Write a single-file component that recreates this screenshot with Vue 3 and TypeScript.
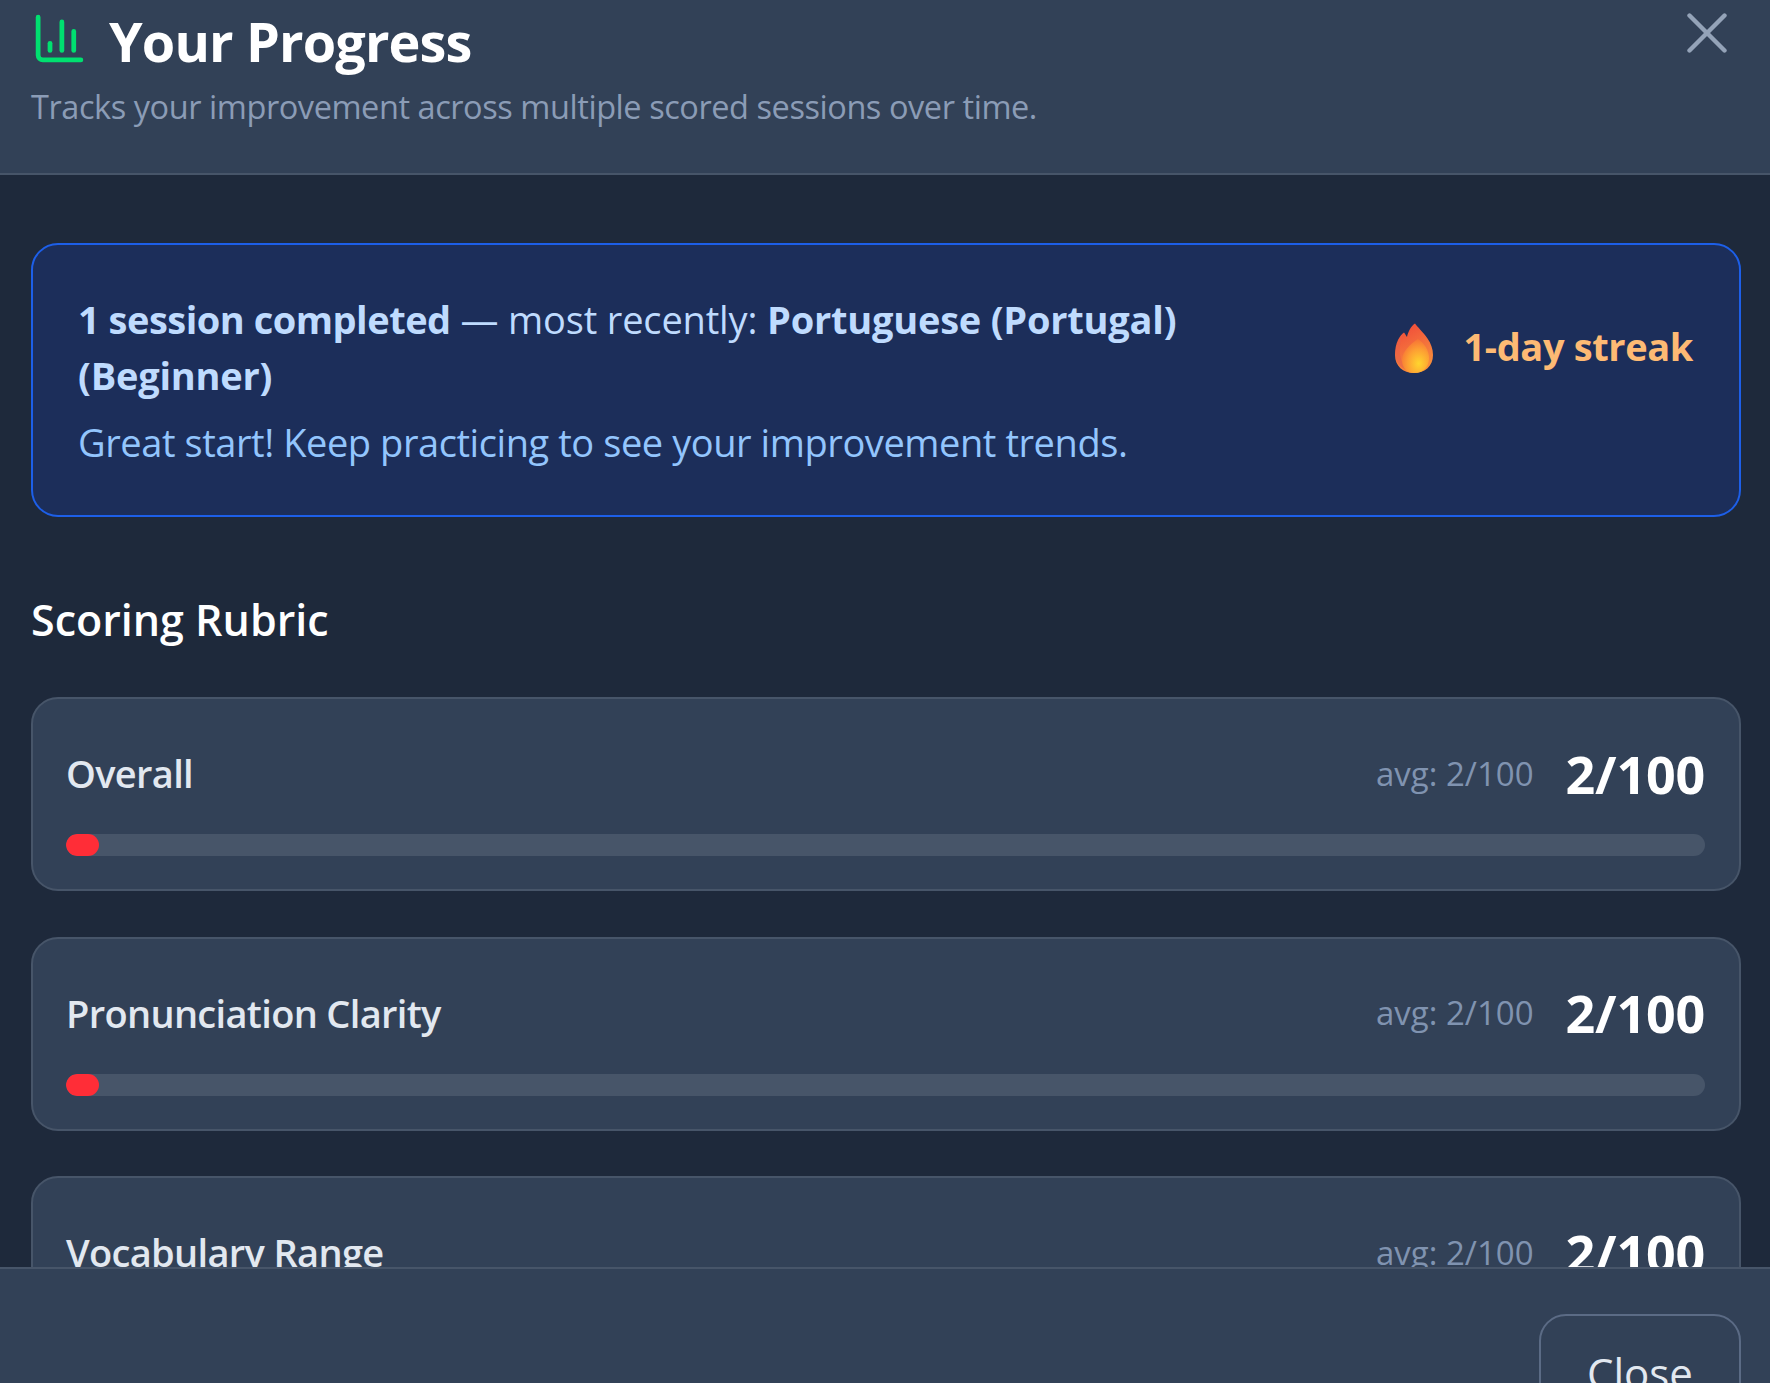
<script setup lang="ts">
interface Row { label: string; avg: string; score: string; pct: number }
const rows: Row[] = [
  { label: 'Overall', avg: 'avg: 2/100', score: '2/100', pct: 2 },
  { label: 'Pronunciation Clarity', avg: 'avg: 2/100', score: '2/100', pct: 2 },
  { label: 'Vocabulary Range', avg: 'avg: 2/100', score: '2/100', pct: 2 },
]
</script>

<template>
  <div class="modal">
    <header class="head">
      <div class="head-text">
        <h1 class="title">
          <svg class="chart" viewBox="0 0 24 24" fill="none" stroke="#00e070" stroke-width="2" stroke-linecap="round" stroke-linejoin="round">
            <path d="M3 3v16a2 2 0 0 0 2 2h16" />
            <path d="M18 17V9" />
            <path d="M13 17V5" />
            <path d="M8 17v-3" />
          </svg>
          <span>Your Progress</span>
        </h1>
        <p class="sub">Tracks your improvement across multiple scored sessions over time.</p>
      </div>
      <button class="x" aria-label="Close">
        <svg viewBox="0 0 40 40" fill="none" stroke="#94a3b8" stroke-width="4.4" stroke-linecap="round">
          <path d="M2.5 2.5 37.5 37.5" />
          <path d="M37.5 2.5 2.5 37.5" />
        </svg>
      </button>
    </header>

    <main class="body">
      <section class="banner">
        <div class="banner-text">
          <p class="summary"><strong>1 session completed</strong> — most recently: <strong class="lang">Portuguese (Portugal) (Beginner)</strong></p>
          <p class="note">Great start! Keep practicing to see your improvement trends.</p>
        </div>
        <div class="streak">
          <svg class="flame" viewBox="0 0 38 50">
            <defs>
              <linearGradient id="fo" x1="0.2" y1="0" x2="0.6" y2="1">
                <stop offset="0" stop-color="#f0483a" />
                <stop offset="0.6" stop-color="#f4763c" />
                <stop offset="1" stop-color="#f9903a" />
              </linearGradient>
              <radialGradient id="fi" cx="0.62" cy="0.72" r="0.75">
                <stop offset="0" stop-color="#ffd52e" />
                <stop offset="0.55" stop-color="#fda033" />
                <stop offset="1" stop-color="#f66d36" />
              </radialGradient>
            </defs>
            <path fill="url(#fo)" d="M20 0.5C22 3.5 28 9 32.5 15.5C36 20.5 38 26 38 32C38 43 30 50 19 50C8 50 0 43 0 32C0 26 1 21 3 17C4.5 14 7 10.5 9 9.5C10.5 11 11 13 12 14C13 9 16 3 20 0.5Z" />
            <path fill="#e8604a" opacity="0.55" d="M9 9.5C6 15 4 22 5 31C5.8 38 9 44 14 48C8 46 1 41 0.5 32C0.3 24 4 14 9 9.5Z" />
            <path fill="url(#fi)" d="M23 16C29 20 34 27 34 35C34 44 28 50 19 50C11 50 7 44 7 37C7 29 15 21 23 16Z" />
          </svg>
          <span class="streak-text">1-day streak</span>
        </div>
      </section>

      <h2 class="rubric">Scoring Rubric</h2>

      <div class="cards">
        <article v-for="r in rows" :key="r.label" class="card">
          <div class="card-top">
            <span class="label">{{ r.label }}</span>
            <div class="vals">
              <span class="avg">{{ r.avg }}</span>
              <span class="score">{{ r.score }}</span>
            </div>
          </div>
          <div class="track"><div class="fill" :style="{ width: r.pct + '%' }"></div></div>
        </article>
      </div>
    </main>

    <footer class="foot">
      <button class="close">Close</button>
    </footer>
  </div>
</template>

<style scoped>
.modal {
  width: 1770px;
  height: 1383px;
  display: flex;
  flex-direction: column;
  overflow: hidden;
  background: #1e293b;
  font-family: "Open Sans", "Noto Sans", sans-serif;
  color: #fff;
}
.head {
  flex: none;
  height: 175px;
  box-sizing: border-box;
  background: #324157;
  border-bottom: 2px solid #475569;
  display: flex;
  justify-content: space-between;
  align-items: flex-start;
  padding: 12px 43px 0 31px;
}
.title {
  margin: 0;
  display: flex;
  align-items: center;
  gap: 21px;
  font-size: 54px;
  line-height: 58px;
  font-weight: 700;
  letter-spacing: -0.85px;
}
.chart {
  width: 57px;
  height: 57px;
  margin-top: -6px;
  flex: none;
}
.sub {
  margin: 15px 0 0;
  font-size: 32.5px;
  line-height: 44px;
  letter-spacing: -0.44px;
  color: #8b9cb6;
}
.x {
  width: 40px;
  height: 40px;
  padding: 0;
  margin-top: 1px;
  border: 0;
  background: none;
  display: block;
}
.x svg {
  width: 40px;
  height: 40px;
  display: block;
}
.body {
  flex: 1;
  min-height: 0;
  overflow: hidden;
  padding: 68px 29px 0 31px;
}
.banner {
  height: 274px;
  box-sizing: border-box;
  background: #1c2e5a;
  border: 2px solid #1d5fe8;
  border-radius: 27px;
  display: flex;
  align-items: center;
  justify-content: space-between;
  padding: 0 46px 0 45px;
}
.banner-text {
  width: 1110px;
}
.summary {
  margin: 0;
  padding-top: 1px;
  font-size: 38px;
  line-height: 56px;
  letter-spacing: -0.15px;
  color: #bfdbfe;
}
.summary strong {
  font-weight: 700;
  letter-spacing: -0.5px;
}
.summary .lang {
  letter-spacing: -0.23px;
}
.note {
  margin: 11px 0 0;
  font-size: 38px;
  line-height: 56px;
  letter-spacing: -0.43px;
  color: #93c5fd;
}
.streak {
  display: flex;
  align-items: center;
  gap: 31px;
  margin-top: -68px;
}
.flame {
  width: 38px;
  height: 50px;
  flex: none;
  margin-top: 4px;
}
.streak-text {
  font-size: 38px;
  font-weight: 700;
  letter-spacing: -0.38px;
  color: #fdba74;
}
.rubric {
  margin: 75px 0 0;
  font-size: 43px;
  line-height: 56px;
  font-weight: 600;
  color: #fff;
}
.cards {
  margin-top: 49px;
  display: flex;
  flex-direction: column;
  gap: 45.5px;
}
.card {
  height: 194px;
  box-sizing: border-box;
  background: #324157;
  border: 2px solid #475569;
  border-radius: 27px;
  padding: 0 34px 0 33px;
}
.card-top {
  display: flex;
  justify-content: space-between;
  align-items: center;
  height: 135px;
  box-sizing: border-box;
  padding-top: 13px;
}
.label {
  font-size: 38px;
  font-weight: 600;
  letter-spacing: -0.67px;
  color: #e2e8f0;
}
.vals {
  display: flex;
  align-items: center;
  gap: 32px;
}
.avg {
  font-size: 33px;
  color: #8093b0;
}
.score {
  font-size: 52px;
  font-weight: 700;
  letter-spacing: -0.2px;
  color: #fff;
}
.track {
  height: 22px;
  background: #475569;
  border-radius: 11px;
  overflow: hidden;
}
.fill {
  height: 100%;
  background: #ff2d37;
  border-radius: 11px;
}
.foot {
  flex: none;
  height: 116px;
  box-sizing: border-box;
  background: #324157;
  border-top: 2px solid #475569;
  display: flex;
  justify-content: flex-end;
  align-items: flex-start;
  padding: 45px 29px 0 0;
  position: relative;
}
.close {
  flex: none;
  width: 202px;
  height: 116px;
  box-sizing: border-box;
  background: #324157;
  border: 2px solid #5b6b85;
  border-radius: 27px;
  font-family: inherit;
  font-size: 42px;
  color: #e2e8f0;
  padding: 0;
}
</style>
